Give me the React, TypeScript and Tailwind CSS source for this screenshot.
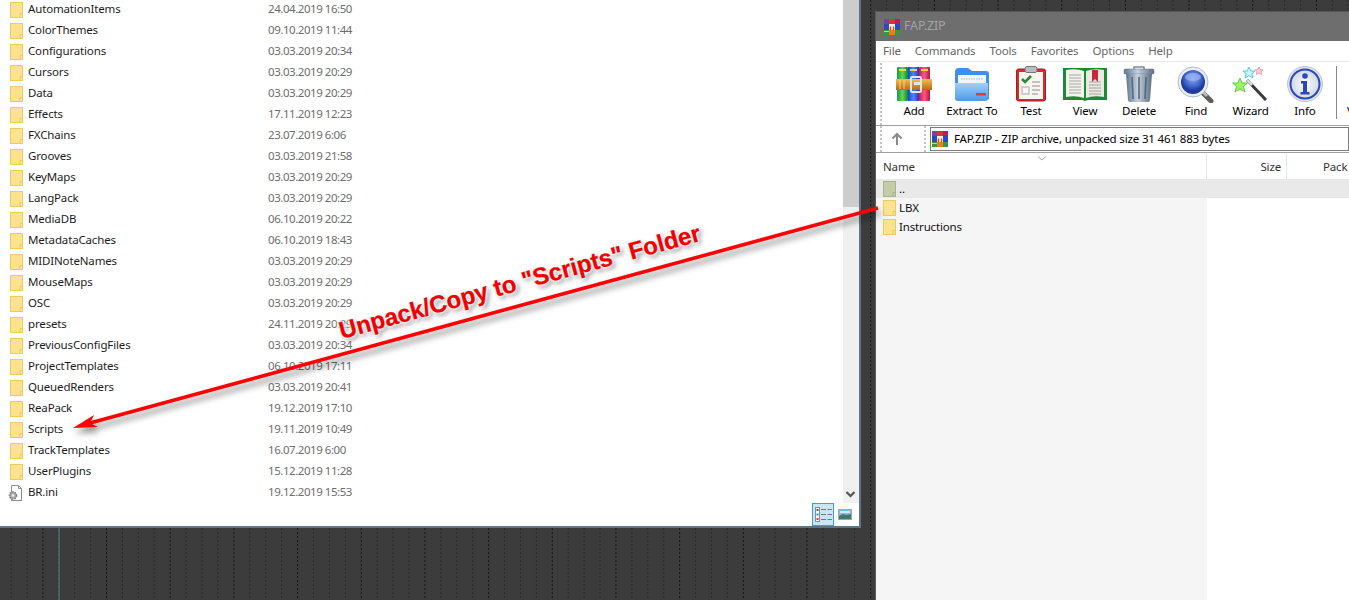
import React from "react";

const rows: [string, string][] = [
  ["AutomationItems", "24.04.2019 16:50"],
  ["ColorThemes", "09.10.2019 11:44"],
  ["Configurations", "03.03.2019 20:34"],
  ["Cursors", "03.03.2019 20:29"],
  ["Data", "03.03.2019 20:29"],
  ["Effects", "17.11.2019 12:23"],
  ["FXChains", "23.07.2019 6:06"],
  ["Grooves", "03.03.2019 21:58"],
  ["KeyMaps", "03.03.2019 20:29"],
  ["LangPack", "03.03.2019 20:29"],
  ["MediaDB", "06.10.2019 20:22"],
  ["MetadataCaches", "06.10.2019 18:43"],
  ["MIDINoteNames", "03.03.2019 20:29"],
  ["MouseMaps", "03.03.2019 20:29"],
  ["OSC", "03.03.2019 20:29"],
  ["presets", "24.11.2019 20:29"],
  ["PreviousConfigFiles", "03.03.2019 20:34"],
  ["ProjectTemplates", "06.10.2019 17:11"],
  ["QueuedRenders", "03.03.2019 20:41"],
  ["ReaPack", "19.12.2019 17:10"],
  ["Scripts", "19.11.2019 10:49"],
  ["TrackTemplates", "16.07.2019 6:00"],
  ["UserPlugins", "15.12.2019 11:28"],
];

const gridX = Array.from({ length: 85 }, (_, i) => ({ x: 11 + 15.92 * i, dark: (i + 2) % 4 === 0 }));

function Folder({ muted = false }: { muted?: boolean }) {
  const fill = muted ? "#c3cca6" : "#fde28f";
  const line = muted ? "#a9b48c" : "#eecb62";
  return (
    <svg width="13" height="16" viewBox="0 0 13 16" className="shrink-0">
      <rect x="0.5" y="0.5" width="12" height="15" fill={fill} stroke={line} />
      <path d="M10 16V11.5h2.5" fill="none" stroke={line} />
    </svg>
  );
}

function IniIcon() {
  return (
    <svg width="15" height="16" viewBox="0 0 15 16" className="shrink-0">
      <path d="M3.5.5h7l3 3v12h-10z" fill="#fff" stroke="#8c8c8c" />
      <path d="M10.5.5v3h3" fill="none" stroke="#8c8c8c" />
      <circle cx="5" cy="10.5" r="3.6" fill="#a9a9a9" stroke="#7d7d7d" strokeDasharray="1.6 1" strokeWidth="1.4" />
      <circle cx="5" cy="10.5" r="1.3" fill="#eee" />
    </svg>
  );
}

function RarSmall() {
  return (
    <svg width="16" height="16" viewBox="0 0 16 16" className="shrink-0">
      <rect width="5" height="5" fill="#7a3fa0" />
      <rect x="5" width="6" height="5" fill="#d6372f" />
      <rect x="11" width="5" height="5" fill="#c2185b" />
      <rect y="5" width="5" height="6" fill="#2a48c0" />
      <rect x="11" y="5" width="5" height="6" fill="#2a48c0" />
      <rect x="5" y="5" width="6" height="6" fill="#f4f0ea" />
      <path d="M6.5 11V7.5M9.5 11V7.5" stroke="#c7501a" strokeWidth="1.4" />
      <rect y="11" width="5" height="5" fill="#2f9a47" />
      <rect x="5" y="11" width="6" height="5" fill="#ee7c1e" />
      <rect x="11" y="11" width="5" height="5" fill="#2f9a47" />
      <rect y="12" width="5" height="1" fill="#f3d23a" />
    </svg>
  );
}

const AddIcon = () => (
  <svg width="36" height="36" viewBox="0 0 36 36">
    <defs>
      <linearGradient id="g1" x1="0" x2="1"><stop offset="0" stopColor="#1d9a3c" /><stop offset=".5" stopColor="#62d455" /><stop offset="1" stopColor="#17803a" /></linearGradient>
      <linearGradient id="b1" x1="0" x2="1"><stop offset="0" stopColor="#1c45c8" /><stop offset=".5" stopColor="#4b88f0" /><stop offset="1" stopColor="#1c3ba8" /></linearGradient>
      <linearGradient id="r1" x1="0" x2="1"><stop offset="0" stopColor="#c81a55" /><stop offset=".5" stopColor="#f85a86" /><stop offset="1" stopColor="#b4143f" /></linearGradient>
      <linearGradient id="o1" x1="0" x2="0" y2="1"><stop offset="0" stopColor="#f7bc52" /><stop offset="1" stopColor="#b96a12" /></linearGradient>
    </defs>
    <rect x="1" y="1" width="11" height="34" rx="1" fill="url(#g1)" />
    <rect x="12" y="1" width="11" height="34" fill="url(#b1)" />
    <rect x="23" y="1" width="11" height="34" rx="1" fill="url(#r1)" />
    <rect x="3" y="3" width="7" height="2" fill="#e8d84a" />
    <rect x="14" y="3" width="7" height="2" fill="#e8d84a" />
    <rect x="25" y="3" width="7" height="2" fill="#e8d84a" />
    <rect x="0" y="13" width="36" height="11" fill="url(#o1)" />
    <rect x="15" y="11" width="10" height="15" rx="1" fill="none" stroke="#e5e5df" strokeWidth="2" />
    <rect x="18" y="16" width="6" height="3" fill="#e5e5df" />
    <path d="M4 14v9M8 14v9" stroke="#f8d07a" />
  </svg>
);

const ExtractIcon = () => (
  <svg width="36" height="36" viewBox="0 0 36 36">
    <defs>
      <linearGradient id="f1" x1="0" x2="0" y2="1"><stop offset="0" stopColor="#9fd0fa" /><stop offset="1" stopColor="#4c9ae8" /></linearGradient>
    </defs>
    <path d="M1 6q0-4 4-4h9l4 3h14q3 0 3 3v24q0 2-3 2H4q-3 0-3-3z" fill="#3f8fea" />
    <rect x="4" y="9" width="28" height="10" fill="#f1f4f8" />
    <path d="M7 13h22" stroke="#b5bcc5" strokeDasharray="1.5 1" />
    <path d="M1 17h33v15q0 3-3 3H4q-3 0-3-3z" fill="url(#f1)" />
    <rect x="22" y="27" width="10" height="2.5" fill="#e23b2c" />
  </svg>
);

const TestIcon = () => (
  <svg width="30" height="36" viewBox="0 0 30 36">
    <rect x="0.5" y="3" width="29" height="32" rx="2" fill="#d62c2c" stroke="#a61d1d" />
    <rect x="3" y="6" width="24" height="27" fill="#f8f6f1" />
    <rect x="9" y="0.5" width="12" height="6" rx="2" fill="#b7bcc1" stroke="#73777b" />
    <path d="M6 13l3 3 6-6" fill="none" stroke="#2a8a35" strokeWidth="2.6" />
    <rect x="6" y="21" width="7" height="7" fill="none" stroke="#a8a8a8" />
    <path d="M16 16h8M16 20h8M16 24h8M16 28h6" stroke="#8d8d8d" />
  </svg>
);

const ViewIcon = () => (
  <svg width="44" height="34" viewBox="0 0 44 34">
    <path d="M0 1h44v32H25l-3 1-3-1H0z" fill="#1b8a32" />
    <path d="M3 3q10-2 18 1v27q-8-3-18-1z" fill="#f2f2ec" />
    <path d="M41 3q-10-2-18 1v27q8-3 18-1z" fill="#e9e9e2" />
    <path d="M6 8h12M6 11h12M6 14h12M6 17h12M6 20h12M6 23h12M6 26h12" stroke="#a7a7a1" />
    <path d="M26 15h12M26 18h12M26 21h12M26 24h12M26 27h12" stroke="#a7a7a1" />
    <path d="M29 3h6v12l-3-3-3 3z" fill="#c7263c" />
  </svg>
);

const DeleteIcon = () => (
  <svg width="32" height="37" viewBox="0 0 32 37">
    <defs>
      <linearGradient id="t1" x1="0" x2="1"><stop offset="0" stopColor="#5f7690" /><stop offset=".45" stopColor="#c4d1de" /><stop offset="1" stopColor="#5c6f84" /></linearGradient>
    </defs>
    <path d="M11 3V1h10v2" fill="none" stroke="#7c8a99" strokeWidth="1.5" />
    <rect x="1" y="3" width="30" height="5" rx="1" fill="url(#t1)" stroke="#69798a" strokeWidth=".5" />
    <path d="M3 8h26l-2 26q0 2-2 2H7q-2 0-2-2z" fill="url(#t1)" />
    <path d="M9 11l1 22M16 11v22M23 11l-1 22" stroke="#59697b" strokeWidth="1.6" />
  </svg>
);

const FindIcon = () => (
  <svg width="38" height="37" viewBox="0 0 38 37">
    <defs>
      <radialGradient id="l1" cy=".35"><stop offset="0" stopColor="#8eaaf0" /><stop offset=".7" stopColor="#3f62c6" /><stop offset="1" stopColor="#1f3ba0" /></radialGradient>
    </defs>
    <path d="M26 27l8 8" stroke="#5e5e5e" strokeWidth="5" strokeLinecap="round" />
    <path d="M26 26l4 4" stroke="#bcbcbc" strokeWidth="3" />
    <circle cx="16" cy="16" r="15" fill="#e9eef4" stroke="#b2bbc6" />
    <circle cx="16" cy="16" r="12" fill="url(#l1)" />
    <ellipse cx="16" cy="11" rx="8" ry="4" fill="#9db6f2" opacity=".7" />
  </svg>
);

const WizardIcon = () => (
  <svg width="38" height="36" viewBox="0 0 38 36">
    <path d="M15 14l19 20" stroke="#3b3b3b" strokeWidth="3" />
    <path d="M15 14l5 5" stroke="#d8d8d8" strokeWidth="3" />
    <polygon points="7,9 9.2,14 14.5,14 10.5,17.6 12,23 7,20 2,23 3.5,17.6 -0.5,14 4.8,14" fill="#9cf06a" stroke="#46c52b" strokeWidth=".8" transform="translate(1 3)" />
    <polygon points="17,1 18.8,5 23,5 19.8,7.8 21,12 17,9.6 13,12 14.2,7.8 11,5 15.2,5" fill="#c8f6fb" stroke="#2ac1d4" strokeWidth=".8" />
    <polygon points="27,1 28.3,3.6 31,3.8 29,5.7 29.6,8.4 27,7 24.4,8.4 25,5.7 23,3.8 25.7,3.6" fill="#fbd3d7" stroke="#ec7d88" strokeWidth=".7" />
  </svg>
);

const InfoIcon = () => (
  <svg width="36" height="36" viewBox="0 0 36 36">
    <defs>
      <radialGradient id="i1"><stop offset="0" stopColor="#fff" /><stop offset="1" stopColor="#cfd6e6" /></radialGradient>
    </defs>
    <circle cx="18" cy="18" r="17.5" fill="#dfe4ea" stroke="#bcc3cc" />
    <circle cx="18" cy="18" r="14.5" fill="url(#i1)" stroke="#2c48b8" strokeWidth="2" />
    <circle cx="18" cy="10" r="2.8" fill="#2c48b8" />
    <path d="M14 15h6v11h2.5v2.5h-9V26H16v-8.5h-2z" fill="#2c48b8" />
  </svg>
);

const tools: [string, string, React.ReactNode][] = [
  ["Add", "w-[56px]", <AddIcon />],
  ["Extract To", "w-[60px]", <ExtractIcon />],
  ["Test", "w-[58px]", <TestIcon />],
  ["View", "w-[50px]", <ViewIcon />],
  ["Delete", "w-[58px]", <DeleteIcon />],
  ["Find", "w-[56px]", <FindIcon />],
  ["Wizard", "w-[53px]", <WizardIcon />],
  ["Info", "w-[56px]", <InfoIcon />],
];

const Gripper = () => (
  <div className="w-[2px] self-stretch border-l-2 border-dotted border-[#c4c4c4]" />
);

export default function App() {
  const font = { fontFamily: '"Noto Sans", sans-serif' };
  return (
    <div
      className="relative flex h-[600px] w-[1349px] items-start overflow-hidden bg-[#3c3c3c] text-[11.5px] leading-[16px] tracking-[-0.15px]"
      style={font}
    >
      <svg className="absolute inset-0" width="1349" height="600">
        {gridX.map((l) => (
          <line key={l.x} x1={l.x} x2={l.x} y1="0" y2="600" stroke={l.dark ? "#141414" : "#2a2a2a"} strokeDasharray="2 2" />
        ))}
        <line x1="59" x2="59" y1="527" y2="600" stroke="#4d8d86" />
      </svg>

      {/* Explorer window */}
      <div className="relative flex h-[528px] w-[861px] shrink-0 flex-col border-r-2 border-b-2 border-[#5f7486] bg-white">
        <div className="flex min-h-0 flex-1">
          <div className="mt-[-1px] min-w-0 flex-1">
            {rows.map(([name, date]) => (
              <div key={name} className="flex h-[21px] items-center">
                <div className="flex w-[268px] items-center gap-[5px] pl-[10px] text-[#1c1c1c]">
                  <Folder />
                  <span className="mt-[-1px]">{name}</span>
                </div>
                <span className="mt-[-1px] tracking-[-0.45px] text-[#6d6d6d]">{date}</span>
              </div>
            ))}
            <div className="flex h-[21px] items-center">
              <div className="flex w-[268px] items-center gap-[5px] pl-[8px] text-[#1c1c1c]">
                <IniIcon />
                <span className="mt-[-1px]">BR.ini</span>
              </div>
              <span className="mt-[-1px] tracking-[-0.45px] text-[#6d6d6d]">19.12.2019 15:53</span>
            </div>
          </div>
          <div className="flex h-[503px] w-[16px] shrink-0 flex-col justify-between bg-[#f0f0f0]">
            <div className="h-[207px] bg-[#cdcdcd]" />
            <svg width="16" height="17" viewBox="0 0 16 17" className="shrink-0">
              <path d="M3.5 6l4 4 4-4" fill="none" stroke="#555" strokeWidth="2.2" />
            </svg>
          </div>
        </div>
        <div className="flex h-[23px] shrink-0 items-stretch justify-end pr-[3px]">
          <div className="flex w-[22px] items-center justify-center border border-[#3ca0d8] bg-[#c9e6f6]">
            <svg width="17" height="15" viewBox="0 0 17 15">
              <rect x="0.5" y="0.5" width="4" height="14" fill="#fff" stroke="#8c8c8c" />
              <rect x="1.5" y="2" width="2" height="2" fill="#555" />
              <rect x="1.5" y="6.5" width="2" height="2" fill="#3d7ee0" />
              <rect x="1.5" y="11" width="2" height="2" fill="#d83a3a" />
              <path d="M6 2.5h5M12.5 2.5h4.5M6 7.5h5M12.5 7.5h4.5M6 12.5h5M12.5 12.5h4.5" stroke="#777" />
            </svg>
          </div>
          <div className="flex w-[22px] items-center justify-center">
            <svg width="14" height="11" viewBox="0 0 14 11">
              <rect x="0.5" y="0.5" width="13" height="10" fill="#7fbde8" stroke="#a5a5a5" />
              <path d="M1 7l4-2 3 1 5-1v5H1z" fill="#3f7a68" />
              <rect x="2" y="2" width="10" height="2" fill="#cfe8f7" />
            </svg>
          </div>
        </div>
      </div>

      {/* WinRAR window */}
      <div className="relative ml-[14px] mt-[11px] flex h-[589px] min-w-0 flex-1 flex-col border-l border-[#5c5c5c] bg-[#f5f5f5]">
        <div className="flex h-[30px] shrink-0 items-center gap-[4px] border-t border-[#565656] bg-[#6e6e6e] pl-[8px] text-[12.5px] text-[#a4a4a4]">
          <RarSmall />
          <span className="mt-[-1px]">FAP.ZIP</span>
        </div>
        <div className="flex h-[20px] shrink-0 items-center gap-[14px] bg-white pb-[1px] pl-[7px] text-[#666]">
          <span>File</span>
          <span>Commands</span>
          <span>Tools</span>
          <span>Favorites</span>
          <span>Options</span>
          <span>Help</span>
        </div>
        <div className="flex h-[65px] shrink-0 items-stretch gap-[4px] border-y border-[#ececec] border-b-[#a0a0a0] bg-white pl-[4px] pt-[1px]">
          <Gripper />
          <div className="flex">
            {tools.map(([label, w, icon]) => (
              <div key={label} className={`flex flex-col items-center text-black ${w}`}>
                <div className="flex h-[42px] items-center justify-center">{icon}</div>
                <span className="mt-[-2px]">{label}</span>
              </div>
            ))}
            <div className="mb-[6px] ml-[3px] mt-[3px] w-px bg-[#8a8a8a]" />
          </div>
          <span className="mt-[40px] pl-[6px] text-black">V</span>
        </div>
        <div className="flex h-[27px] shrink-0 items-stretch gap-[4px] border-b border-[#a0a0a0] bg-white pl-[4px]">
          <Gripper />
          <div className="flex w-[34px] items-center justify-center pr-[12px]">
            <svg width="14" height="14" viewBox="0 0 14 14" className="shrink-0">
              <path d="M7 13V2M2.5 6.5L7 2l4.5 4.5" fill="none" stroke="#8a8a8a" strokeWidth="2" />
            </svg>
          </div>
          <Gripper />
          <div className="my-[1px] flex flex-1 items-center gap-[6px] border border-[#7a7a7a] pl-[1px] text-black">
            <RarSmall />
            <span>FAP.ZIP - ZIP archive, unpacked size 31 461 883 bytes</span>
          </div>
        </div>
        <div className="relative flex h-[26px] shrink-0 items-center bg-white pt-[1px] text-[#333]">
          <div className="flex h-full w-[331px] items-center border-r border-[#e5e5e5] pl-[7px]">Name</div>
          <div className="flex h-full w-[80px] items-center justify-end border-r border-[#e5e5e5] pr-[5px]">Size</div>
          <div className="pl-[36px]">Pack</div>
          <svg className="absolute left-[160px] top-[2px]" width="12" height="7" viewBox="0 0 12 7">
            <path d="M2 1.5l4 3.5 4-3.5" fill="none" stroke="#a8a8a8" />
          </svg>
        </div>
        <div className="flex min-h-0 flex-1 items-start bg-[linear-gradient(90deg,#f5f5f5_331px,#ffffff_331px)]">
          <div className="w-full">
            <div className="flex h-[19px] items-center gap-[3px] bg-[#e9e9e9] pl-[7px] text-black">
              <Folder muted />
              <span>..</span>
            </div>
            <div className="flex h-[19px] items-center gap-[3px] pl-[7px] text-[#111]">
              <Folder />
              <span>LBX</span>
            </div>
            <div className="flex h-[19px] items-center gap-[3px] pl-[7px] text-[#111]">
              <Folder />
              <span>Instructions</span>
            </div>
          </div>
        </div>
      </div>

      {/* Annotation */}
      <svg className="absolute inset-0" width="1349" height="600">
        <defs>
          <filter id="sh" x="-5%" y="-20%" width="110%" height="140%">
            <feDropShadow dx="2" dy="5" stdDeviation="3" floodColor="#000" floodOpacity=".45" />
          </filter>
        </defs>
        <g filter="url(#sh)">
          <line x1="878" y1="208" x2="90" y2="423" stroke="#ff0000" strokeWidth="3.6" />
          <polygon points="73,428 94,415 90,423 98,427" fill="#ff0000" />
        </g>
      </svg>
      <div
        className="absolute left-[333px] top-[264px] rotate-[-15.3deg] whitespace-nowrap text-[24px] leading-[36px] font-bold tracking-normal text-[#f00000] [-webkit-text-stroke:0.3px_#f00000] [text-shadow:0_0_3px_#fff,0_0_3px_#fff,0_0_3px_#fff,0_0_4px_#fff,2px_3px_5px_rgba(0,0,0,0.55)]"
        style={{ fontFamily: '"Liberation Sans", sans-serif' }}
      >
        Unpack/Copy to "Scripts" Folder
      </div>
    </div>
  );
}
